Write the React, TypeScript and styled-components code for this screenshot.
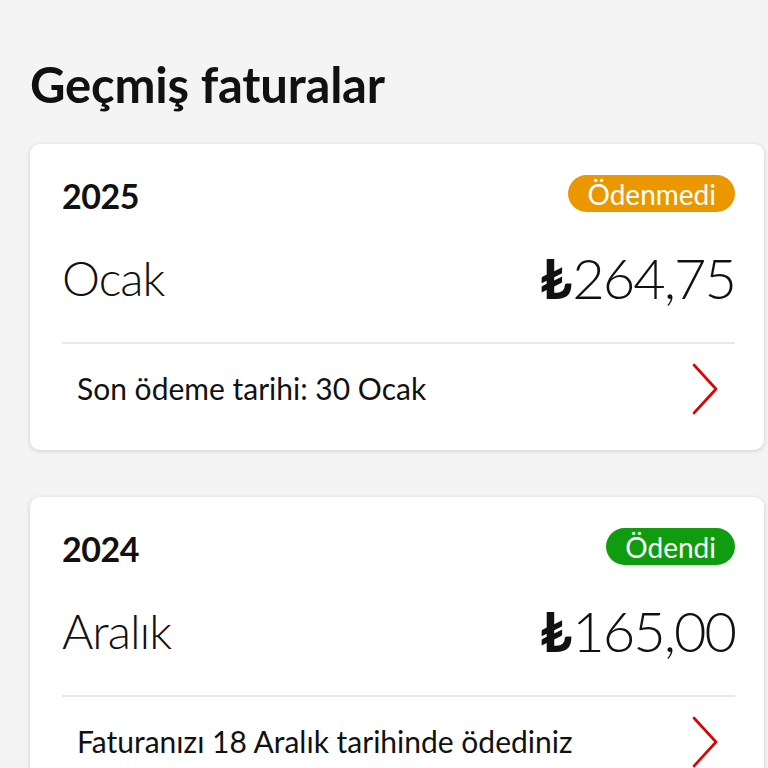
import React from "react";
import styled, { createGlobalStyle } from "styled-components";

const Global = createGlobalStyle`
  html, body { margin: 0; padding: 0; background: #f4f4f4; }
  body { font-family: Lato, "Open Sans", sans-serif; color: #111; }
`;

const Page = styled.div`
  padding: 52px 4px 40px 30px;
  display: flex;
  flex-direction: column;
`;

const Title = styled.h1`
  margin: 0 0 28px 0;
  font-size: 49px;
  line-height: 64px;
  font-weight: 700;
  letter-spacing: -0.2px;
  color: #111;
`;

const List = styled.div`
  display: flex;
  flex-direction: column;
  gap: 47px;
`;

const Card = styled.div`
  background: #fff;
  border-radius: 10px;
  box-shadow: 0 1px 5px rgba(0, 0, 0, 0.16);
  padding: 31px 29px 16px 32px;
  display: flex;
  flex-direction: column;
`;

const Header = styled.div`
  display: flex;
  align-items: center;
  justify-content: space-between;
  height: 37px;
`;

const Year = styled.div`
  font-size: 34px;
  font-weight: 700;
  letter-spacing: -0.5px;
  padding-top: 4px;
`;

const Badge = styled.span<{ $tone: "warn" | "ok" }>`
  display: inline-flex;
  align-items: center;
  height: 37px;
  padding: 0 19px;
  border-radius: 19px;
  background: ${(p) => (p.$tone === "warn" ? "#eb9700" : "#0f9d0f")};
  color: #fff;
  font-size: 28px;
  font-weight: 400;
`;

const Main = styled.div`
  display: flex;
  align-items: center;
  justify-content: space-between;
  margin-top: 37px;
  height: 56px;
`;

const Month = styled.div`
  font-size: 48px;
  font-weight: 300;
  letter-spacing: -1px;
`;

const Amount = styled.div`
  font-size: 56px;
  font-weight: 300;
  letter-spacing: -2px;
  display: flex;
  align-items: baseline;
`;

const Lira = styled.span`
  font-weight: 700;
  margin-right: 2px;
`;

const Divider = styled.hr`
  border: none;
  border-top: 2px solid #e8e8e8;
  margin: 37px 0 0 0;
`;

const Footer = styled.div`
  display: flex;
  align-items: center;
  justify-content: space-between;
  height: 90px;
  padding: 0 16px 0 15px;
`;

const FooterText = styled.div`
  font-size: 30px;
  font-weight: 400;
  margin-top: -2px;
`;

const Chevron = () => (
  <svg width="28" height="52" viewBox="0 0 28 52" fill="none">
    <path d="M3 2 L25 26 L3 50" stroke="#e00000" strokeWidth="2.6" strokeLinecap="round" strokeLinejoin="round" />
  </svg>
);

type Bill = {
  year: string;
  status: string;
  tone: "warn" | "ok";
  month: string;
  amount: string;
  note: string;
};

const bills: Bill[] = [
  { year: "2025", status: "Ödenmedi", tone: "warn", month: "Ocak", amount: "264,75", note: "Son ödeme tarihi: 30 Ocak" },
  { year: "2024", status: "Ödendi", tone: "ok", month: "Aralık", amount: "165,00", note: "Faturanızı 18 Aralık tarihinde ödediniz" },
];

export default function App() {
  return (
    <>
      <Global />
      <Page>
        <Title>Geçmiş faturalar</Title>
        <List>
          {bills.map((b) => (
            <Card key={b.year}>
              <Header>
                <Year>{b.year}</Year>
                <Badge $tone={b.tone}>{b.status}</Badge>
              </Header>
              <Main>
                <Month>{b.month}</Month>
                <Amount>
                  <Lira>₺</Lira>
                  {b.amount}
                </Amount>
              </Main>
              <Divider />
              <Footer>
                <FooterText>{b.note}</FooterText>
                <Chevron />
              </Footer>
            </Card>
          ))}
        </List>
      </Page>
    </>
  );
}
